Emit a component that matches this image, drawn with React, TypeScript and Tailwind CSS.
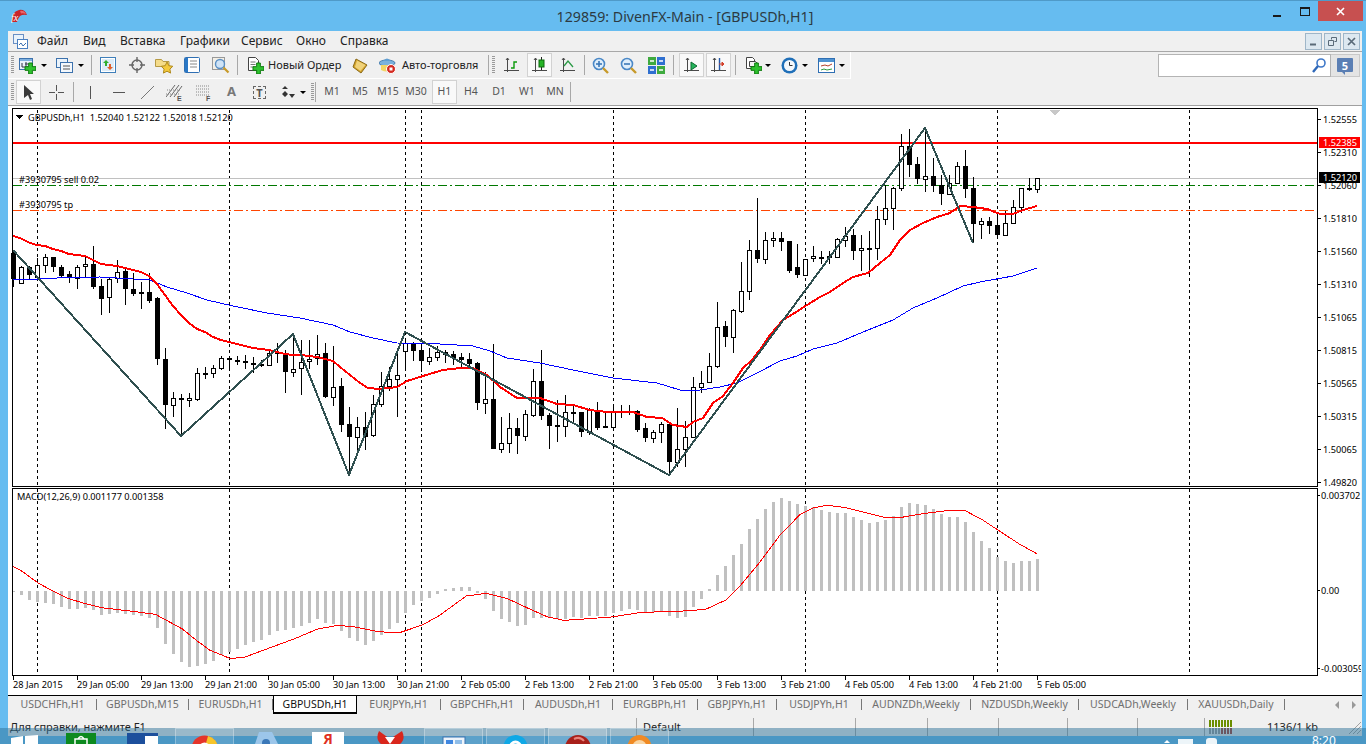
import React from "react";

// [wickTop, bodyTop, bodyBottom, wickBottom, white?1:0]; candle i sits on pixel column 13 + 8i
const C: number[][] = [
[250,253,279,287,0],[266,267,283,284,1],[266,267,275,279,0],[258,265,277,279,1],[254,257,265,273,1],[257,257,267,272,0],[265,267,276,278,0],[271,274,277,283,0],[265,267,278,289,1],[257,264,266,277,1],
[246,264,287,289,0],[279,286,299,315,0],[277,279,297,313,1],[260,272,278,283,1],[269,271,289,305,0],[273,289,294,296,0],[282,292,293,309,0],[273,292,301,303,0],[297,298,359,365,0],[348,359,405,429,0],
[392,398,405,417,1],[394,398,400,436,0],[393,398,400,407,1],[368,373,399,401,1],[367,373,374,379,1],[365,368,373,378,1],[356,358,368,370,1],[356,358,360,370,0],[356,360,362,365,0],[355,361,363,369,0],
[357,363,364,373,0],[360,364,366,367,0],[350,353,365,366,1],[343,352,353,363,0],[350,354,372,393,0],[334,369,372,377,1],[340,362,368,395,1],[340,359,361,369,1],[335,354,358,365,1],[343,353,397,398,0],
[346,387,397,406,1],[378,386,425,432,0],[407,424,437,474,0],[417,427,437,455,1],[412,427,437,450,0],[395,404,435,437,1],[372,386,404,407,1],[367,379,386,391,1],[353,375,379,417,1],[341,343,351,369,1],
[342,343,351,361,0],[345,350,361,372,0],[348,357,361,365,1],[346,352,357,361,1],[350,352,355,363,0],[351,354,358,365,0],[353,357,360,368,0],[353,359,364,369,0],[362,363,403,410,0],[372,399,403,414,1],
[344,399,449,449,0],[417,443,449,453,1],[413,428,443,453,1],[418,428,436,454,0],[410,414,436,441,1],[369,381,415,417,1],[350,381,416,420,0],[413,415,426,449,0],[400,425,426,442,0],[395,412,426,437,1],
[406,412,414,423,0],[412,412,432,437,0],[408,410,432,435,1],[402,411,428,430,0],[413,426,428,428,0],[405,412,427,427,1],[405,411,412,418,0],[405,411,412,415,0],[410,411,430,432,0],[423,428,438,442,0],
[430,432,438,443,1],[422,424,432,443,1],[423,424,462,475,0],[408,449,462,467,1],[421,437,449,467,1],[377,387,437,438,1],[371,383,387,393,1],[353,366,382,382,1],[302,327,366,368,1],[321,326,337,347,0],
[309,310,337,353,1],[262,291,311,313,1],[240,250,291,300,1],[198,250,259,263,0],[232,240,259,264,1],[232,238,240,247,1],[232,238,242,251,0],[241,241,271,273,0],[244,267,275,278,0],[259,259,275,275,1],
[246,256,258,262,1],[251,257,258,264,0],[251,256,257,264,0],[238,239,257,257,1],[227,236,240,247,1],[229,235,251,260,0],[235,248,250,271,1],[231,248,248,277,0],[206,219,248,260,1],[185,208,219,225,1],
[187,188,208,230,1],[134,146,188,191,1],[129,146,165,177,0],[157,164,179,184,0],[128,176,179,192,1],[158,176,186,192,0],[175,185,194,205,0],[175,183,194,195,1],[162,166,183,184,1],[150,166,189,198,0],
[177,188,224,243,0],[218,221,224,239,1],[217,221,226,234,0],[215,225,235,237,0],[211,223,235,235,1],[200,207,223,223,1],[188,188,207,213,1],[178,188,190,191,0],[178,178,189,193,1],
];

// reference zoom rows of the histogram tip; 318 is the zero line, y = 485 + v/3
const H: number[] = [320,330,345,352,355,357,366,372,372,368,376,390,386,383,387,390,392,400,428,476,506,530,545,542,538,527,510,500,491,480,472,465,450,438,434,430,422,414,403,414,417,438,458,468,480,468,450,432,414,385,360,348,338,327,312,310,306,306,325,342,378,402,410,423,420,398,398,400,402,402,396,400,392,392,392,385,378,372,375,381,381,380,392,398,395,365,342,312,270,243,210,177,132,102,72,51,39,48,57,63,66,75,81,84,84,96,105,114,111,105,93,66,54,57,60,72,87,96,96,111,141,168,189,216,228,234,228,228,222];

const pts = (a: number[][]) => a.map((p) => p.join(",")).join(" ");

const RED_MA = [[13,236],[20,238],[30,243],[37,245],[45,246],[53,249],[61,251],[69,254],[77,255],[85,256],[93,260],[101,264],[109,265],[117,266],[125,268],[133,270],[141,272],[149,276],[157,284],[165,295],[173,306],[181,315],[189,323],[197,329],[205,332],[213,337],[221,340],[229,342],[237,344],[245,346],[253,348],[261,349],[269,350],[277,352],[285,354],[293,355],[301,355],[309,356],[317,357],[325,359],[333,361],[340,367],[350,375],[360,383],[368,388],[380,389],[397,387],[407,381],[423,376],[443,370],[460,368],[473,368],[487,375],[500,387],[517,398],[540,398],[557,404],[573,405],[590,410],[607,412],[633,412],[647,417],[662,418],[673,425],[680,426],[687,427],[693,422],[703,418],[713,403],[723,396],[733,383],[743,368],[752,360],[762,347],[770,335],[783,320],[793,314],[807,305],[820,297],[830,292],[843,283],[853,277],[868,273],[880,263],[890,255],[900,240],[910,230],[923,223],[937,217],[950,213],[960,206],[973,207],[987,209],[1000,214],[1013,214],[1023,210],[1037,206]];
const BLUE_MA = [[13,279],[40,279],[57,278],[100,277],[150,280],[167,287],[187,293],[207,300],[233,306],[267,313],[300,318],[333,325],[350,332],[373,338],[397,343],[440,344],[473,346],[490,351],[507,358],[540,363],[573,370],[613,378],[657,383],[680,390],[700,390],[720,387],[737,383],[757,373],[780,361],[797,356],[813,349],[837,343],[863,332],[893,320],[913,308],[937,298],[963,286],[980,282],[1013,276],[1037,268]];
const ZIGZAG = [[13,250],[181,436],[293,334],[349,475],[405,332],[669,475],[925,128],[973,243]];
const SIGNAL_A = [[38,244],[60,255],[110,292],[150,315],[200,340],[250,355],[300,368],[400,380],[460,388],[500,410],[540,432],[580,465],[620,495],[680,520],[720,518],[800,488],[870,462],[940,432],[1000,421],[1050,426],[1120,440],[1180,444],[1250,420],[1300,392],[1380,333],[1440,325],[1500,340],[1568,372]];
const SIGNAL_B = [[50,395],[100,406],[160,402],[240,396],[330,382],[440,379],[520,373],[580,345],[620,305],[680,232],[740,150],[800,88],[840,68],[880,61],[930,67],[1050,97],[1100,97],[1170,85],[1240,76],[1290,78],[1340,105],[1400,145],[1450,178],[1500,206]];
const SIGNAL = [
  ...SIGNAL_A.map(([x, y]) => [x / 2.96, 485 + y / 3]),
  ...SIGNAL_B.map(([x, y]) => [530 + x / 2.96, 485 + y / 3]),
];

const GRID = [37, 229, 405, 421, 613, 805, 997, 1189];
const PRICES: [string, number][] = [["1.52555",119],["1.52310",152],["1.52060",185],["1.51810",218],["1.51560",251],["1.51310",284],["1.51065",317],["1.50815",350],["1.50565",383],["1.50315",416],["1.50065",449],["1.49820",482]];
const TIMES: [string, number][] = [["28 Jan 2015",13],["29 Jan 05:00",77],["29 Jan 13:00",141],["29 Jan 21:00",205],["30 Jan 05:00",268],["30 Jan 13:00",333],["30 Jan 21:00",397],["2 Feb 05:00",461],["2 Feb 13:00",525],["2 Feb 21:00",589],["3 Feb 05:00",653],["3 Feb 13:00",717],["3 Feb 21:00",781],["4 Feb 05:00",845],["4 Feb 13:00",909],["4 Feb 21:00",973],["5 Feb 05:00",1037]];

function Chart() {
  return (
    <svg width={1353} height={589} viewBox="8 106 1353 589" className="block shrink-0 bg-white font-['Liberation_Sans',sans-serif] text-[9.2px]">
      <g shapeRendering="crispEdges">
        {GRID.map((x) => (
          <g key={x} stroke="#000" strokeDasharray="3 3">
            <line x1={x + 0.5} x2={x + 0.5} y1={110} y2={486} />
            <line x1={x + 0.5} x2={x + 0.5} y1={489} y2={675} />
          </g>
        ))}
        <line x1={13} x2={1318} y1={178.5} y2={178.5} stroke="#c0c0c0" />
        <line x1={13} x2={1318} y1={185.5} y2={185.5} stroke="#007800" strokeDasharray="9 3 2 3" />
        <line x1={13} x2={1318} y1={210.5} y2={210.5} stroke="#ff4500" strokeDasharray="9 3 2 3" />
        <rect x={13} y={142} width={1304} height={2} fill="#ff0000" />
        {H.map((v, i) => {
          const y = 485 + v / 3;
          return <rect key={i} x={12 + 8 * i} y={Math.min(y, 591)} width={3} height={Math.max(1, Math.abs(591 - y))} fill="#c0c0c0" />;
        })}
        {C.map(([wt, bt, bb, wb, w], i) => {
          const x = 13 + 8 * i;
          return (
            <g key={i}>
              <rect x={x} y={wt} width={1} height={wb - wt} fill="#000" />
              {w ? (
                <rect x={x - 1.5} y={bt + 0.5} width={4} height={Math.max(bb - bt, 1)} fill="#fff" stroke="#000" />
              ) : (
                <rect x={x - 2} y={bt} width={5} height={Math.max(bb - bt, 2)} fill="#000" />
              )}
            </g>
          );
        })}
        <polyline points={pts(BLUE_MA)} fill="none" stroke="#0000ff" strokeWidth={1} />
        <polyline points={pts(RED_MA)} fill="none" stroke="#ff0000" strokeWidth={2} />
        <polyline points={pts(ZIGZAG)} fill="none" stroke="#2f4f4f" strokeWidth={2} />
        <polyline points={pts(SIGNAL)} fill="none" stroke="#ff0000" strokeWidth={1} />
        <rect x={12.5} y={108.5} width={1305} height={378} fill="none" stroke="#000" />
        <rect x={12.5} y={488.5} width={1305} height={187} fill="none" stroke="#000" />
        {PRICES.map(([, y]) => <rect key={y} x={1318} y={y} width={3} height={1} fill="#000" />)}
        {[495, 590, 668].map((y) => <rect key={y} x={1318} y={y} width={2} height={1} fill="#000" />)}
        {TIMES.map(([, x]) => <rect key={x} x={x} y={676} width={1} height={4} fill="#000" />)}
        <polygon points="1050,110 1060,110 1055,116" fill="#c8c8c8" />
        <polygon points="16,115 23,115 19.5,119" fill="#000" />
        <rect x={1319} y={137} width={41} height={11} fill="#ff0000" />
        <rect x={1319} y={172} width={41} height={11} fill="#000" />
      </g>
      <text x={28} y={120.5}>GBPUSDh,H1 &nbsp;1.52040 1.52122 1.52018 1.52120</text>
      <text x={19} y={182.5}>#3930795 sell 0.02</text>
      <text x={19} y={207.5}>#3930795 tp</text>
      <text x={17} y={500}>MACD(12,26,9) 0.001177 0.001358</text>
      {PRICES.map(([t, y]) => <text key={t} x={1323} y={y + 3.5}>{t}</text>)}
      <text x={1323} y={146} fill="#fff">1.52385</text>
      <text x={1323} y={181} fill="#fff">1.52120</text>
      <text x={1321} y={498.5}>0.003702</text>
      <text x={1321} y={593.5}>0.00</text>
      <text x={1321} y={671.5}>-0.003059</text>
      {TIMES.map(([t, x]) => <text key={t} x={x} y={687.5}>{t}</text>)}
    </svg>
  );
}

const Drop = ({ ml }: { ml: string }) => (
  <span className={`block h-0 w-0 shrink-0 border-x-[3px] border-t-[3px] border-x-transparent border-t-black ${ml}`} />
);
const Sep = ({ ml }: { ml: string }) => <span className={`block h-[20px] w-px shrink-0 bg-[#a8a8a8] ${ml}`} />;
const Grip = ({ ml }: { ml: string }) => (
  <span className={`block h-[18px] w-[3px] shrink-0 bg-[repeating-linear-gradient(to_bottom,#9a9a9a_0,#9a9a9a_1px,transparent_1px,transparent_2px)] ${ml}`} />
);
const Btn = ({ ml, children }: { ml: string; children: React.ReactNode }) => (
  <span className={`flex h-[24px] w-[25px] shrink-0 items-center justify-center border border-[#d2d2d2] bg-[#f9f9f9] ${ml}`}>{children}</span>
);

function Ico({ w = 17, h = 17, ml, children }: { w?: number; h?: number; ml?: string; children: React.ReactNode }) {
  return (
    <svg width={w} height={h} viewBox={`0 0 ${w} ${h}`} className={`block shrink-0 ${ml ?? ""}`}>
      {children}
    </svg>
  );
}

const Plus = ({ x = 8, y = 8, s = 9 }: { x?: number; y?: number; s?: number }) => (
  <path d={`M${x + s / 3} ${y}h${s / 3}v${s / 3}h${s / 3}v${s / 3}h${-s / 3}v${s / 3}h${-s / 3}v${-s / 3}h${-s / 3}v${-s / 3}h${s / 3}z`} fill="#2fc22f" stroke="#0d7a0d" strokeWidth={1} />
);
const WinChart = () => (
  <g>
    <rect x={0.5} y={1.5} width={13} height={11} fill="#eaf3fb" stroke="#3d72ad" />
    <rect x={1} y={2} width={12} height={2} fill="#7fb0de" />
    <path d="M3 6v4M3 10h7M7 5v4M6 7h3" stroke="#334" fill="none" />
  </g>
);
const MagGlass = ({ sign }: { sign: "+" | "-" }) => (
  <g>
    <circle cx={7} cy={7} r={5.5} fill="#dfeefb" stroke="#4a88c7" strokeWidth={1.6} />
    <path d="M11 11l5 5" stroke="#c79a2a" strokeWidth={2.4} />
    <path d="M4 7h6" stroke="#3b78b8" strokeWidth={1.6} />
    {sign === "+" && <path d="M7 4v6" stroke="#3b78b8" strokeWidth={1.6} />}
  </g>
);
const Axes = () => <path d="M3.5 1v14M0 13.5h15M2 3l1.5-2 1.5 2" stroke="#4a4a4a" fill="none" />;

function Toolbar1() {
  return (
    <div className="flex h-[26px] w-[843px] shrink-0 items-center border-r border-white">
      <Grip ml="ml-[3px]" />
      <Ico ml="ml-[5px]">
        <WinChart />
        <Plus x={6} y={6} s={11} />
      </Ico>
      <Drop ml="ml-[5px]" />
      <Ico ml="ml-[9px]">
        <rect x={0.5} y={1.5} width={11} height={9} fill="#eaf3fb" stroke="#3d72ad" />
        <rect x={4.5} y={5.5} width={12} height={10} fill="#f4f8fc" stroke="#3d72ad" />
        <path d="M7 9h7M7 12h7" stroke="#555" />
      </Ico>
      <Drop ml="ml-[5px]" />
      <Sep ml="ml-[7px]" />
      <Ico ml="ml-[8px]" w={16} h={16}>
        <rect x={0.5} y={0.5} width={15} height={15} fill="#fff" stroke="#3f7fba" />
        <rect x={2} y={2} width={12} height={12} fill="#dcecf8" />
        <path d="M6 3l3 3H7v3H5V6H3z" fill="#2faf2f" />
        <path d="M10 13l-3-3h2V7h2v3h2z" fill="#e0602a" />
      </Ico>
      <Ico ml="ml-[13px]" w={16} h={16}>
        <circle cx={8} cy={8} r={5} fill="#ececec" stroke="#666" strokeWidth={1.4} />
        <path d="M8 0v5M8 11v5M0 8h5M11 8h5" stroke="#666" strokeWidth={1.4} />
      </Ico>
      <Ico ml="ml-[10px]" w={18} h={17}>
        <path d="M0.5 2.5h6l1.5 2h6v5h-13.5z" fill="#f5dc8a" stroke="#b69a45" />
        <path d="M12 5l1.8 3.7 4 .6-2.9 2.8.7 4-3.6-1.9-3.6 1.9.7-4-2.9-2.8 4-.6z" fill="#f4c93c" stroke="#b08a1e" />
      </Ico>
      <Ico ml="ml-[11px]" w={16} h={16}>
        <rect x={0.5} y={0.5} width={15} height={15} rx={1} fill="#fff" stroke="#2f6fb3" />
        <rect x={1} y={1} width={3} height={14} fill="#2a78c6" />
        <path d="M6 4h7M6 7h7M6 10h7" stroke="#888" />
      </Ico>
      <Ico ml="ml-[12px]" w={18} h={18}>
        <rect x={0.5} y={1.5} width={12} height={12} fill="#f3efe6" stroke="#999" />
        <circle cx={8} cy={8} r={4.5} fill="#cfe3f6" stroke="#5a8fc4" strokeWidth={1.4} />
        <path d="M11.5 11.5l5 5" stroke="#c79a2a" strokeWidth={2.2} />
      </Ico>
      <Sep ml="ml-[7px]" />
      <Ico ml="ml-[9px]">
        <path d="M1.5 0.5h7l3 3v10h-10z" fill="#fff" stroke="#444" />
        <path d="M3.5 5h5M3.5 7.5h5M3.5 10h3" stroke="#777" />
        <Plus x={6} y={6} s={11} />
      </Ico>
      <span className="ml-[4px] w-[74px] shrink-0 whitespace-nowrap text-[11px] text-[#222]">Новый Ордер</span>
      <Ico ml="ml-[10px]">
        <path d="M4 2l11 6-6 8L1 10z" fill="#d4a32a" stroke="#8a6a18" />
        <path d="M5 3.5l8.5 4.5-5 6L3 10z" fill="#f0d27a" />
      </Ico>
      <Ico ml="ml-[10px]">
        <ellipse cx={8} cy={6} rx={8} ry={3} fill="#7ab1dc" stroke="#4b7fae" />
        <path d="M4 4q4-5 8 0z" fill="#5f9ed2" />
        <path d="M2 8h12v5q-6 3-12 0z" fill="#f3d564" />
        <circle cx={12} cy={12} r={4.5} fill="#d42a20" stroke="#fff" />
        <rect x={10.5} y={10.5} width={3} height={3} fill="#fff" />
      </Ico>
      <span className="ml-[6px] w-[79px] shrink-0 whitespace-nowrap text-[11px] text-[#222]">Авто-торговля</span>
      <Sep ml="ml-[7px]" />
      <Grip ml="ml-[3px]" />
      <Ico ml="ml-[9px]" w={15} h={16}>
        <Axes />
        <path d="M7 11h3V5h3" stroke="#0a9a0a" strokeWidth={1.4} fill="none" />
      </Ico>
      <Btn ml="ml-[8px]">
        <Ico w={15} h={16}>
          <Axes />
          <path d="M9.5 0v13" stroke="#222" />
          <rect x={7} y={3} width={5} height={7} fill="#25b325" stroke="#0c6a0c" />
        </Ico>
      </Btn>
      <Ico ml="ml-[8px]" w={15} h={16}>
        <Axes />
        <path d="M4 9l4-5 5 6" stroke="#2a9a45" strokeWidth={1.3} fill="none" />
      </Ico>
      <Sep ml="ml-[9px]" />
      <Ico ml="ml-[7px]"><MagGlass sign="+" /></Ico>
      <Ico ml="ml-[11px]"><MagGlass sign="-" /></Ico>
      <Ico ml="ml-[11px]">
        <rect x={0} y={0} width={8} height={8} fill="#3faa3f" />
        <rect x={9} y={0} width={8} height={8} fill="#2f6fd0" />
        <rect x={0} y={9} width={8} height={8} fill="#2f6fd0" />
        <rect x={9} y={9} width={8} height={8} fill="#3faa3f" />
        <path d="M2 4h4M11 4h4M2 13h4M11 13h4" stroke="#fff" strokeWidth={1.6} />
      </Ico>
      <Sep ml="ml-[8px]" />
      <Btn ml="ml-[5px]">
        <Ico w={15} h={16}>
          <Axes />
          <path d="M7 5l6 4-6 4z" fill="#25b35a" stroke="#0c6a30" />
        </Ico>
      </Btn>
      <Btn ml="ml-[2px]">
        <Ico w={15} h={16}>
          <Axes />
          <path d="M8.5 1v12" stroke="#2257a8" strokeWidth={1.4} />
          <path d="M11 7l-3 0M11 5l2 2-2 2z" fill="#d2402a" stroke="#d2402a" />
        </Ico>
      </Btn>
      <Sep ml="ml-[4px]" />
      <Ico ml="ml-[9px]">
        <path d="M1.5 0.5h6l2 2v9h-8z" fill="#fff" stroke="#444" />
        <path d="M4.5 4.5h6l2 2v3h-8z" fill="#f4f4f4" stroke="#444" />
        <Plus x={6} y={6} s={11} />
      </Ico>
      <Drop ml="ml-[3px]" />
      <Ico ml="ml-[10px]">
        <circle cx={8.5} cy={8.5} r={8} fill="#1f6fb8" />
        <circle cx={8.5} cy={8.5} r={5.5} fill="#f4f8fc" />
        <path d="M8.5 5v3.5h3" stroke="#333" fill="none" />
      </Ico>
      <Drop ml="ml-[4px]" />
      <Ico ml="ml-[10px]">
        <rect x={0.5} y={1.5} width={16} height={14} fill="#fff" stroke="#2f6fb3" />
        <rect x={1} y={2} width={15} height={3} fill="#4f93d2" />
        <path d="M3 9l4-1 3 1 4-2" stroke="#b5402a" fill="none" />
        <path d="M3 13l3-1 3 1 5-1" stroke="#2f9a3f" fill="none" />
      </Ico>
      <Drop ml="ml-[4px]" />
    </div>
  );
}

const TF = ({ t }: { t: string }) => (
  <span className="flex w-[28px] shrink-0 justify-center text-[10.5px] text-[#555]">{t}</span>
);

function Toolbar2() {
  return (
    <div className="flex h-[26px] shrink-0 items-center">
      <Grip ml="ml-[3px]" />
      <Btn ml="ml-[2px]">
        <Ico w={13} h={17}>
          <path d="M2 1l10 9H8l2 5-2 1-2-5-4 3z" fill="#3a3a3a" />
        </Ico>
      </Btn>
      <Ico ml="ml-[8px]" w={15} h={15}>
        <path d="M7.5 0v6M7.5 9v6M0 7.5h6M9 7.5h6" stroke="#555" />
      </Ico>
      <Sep ml="ml-[9px]" />
      <span className="ml-[16px] block h-[13px] w-px shrink-0 bg-[#555]" />
      <span className="ml-[22px] block h-px w-[12px] shrink-0 bg-[#555]" />
      <Ico ml="ml-[16px]" w={13} h={13}>
        <path d="M0 13L13 0" stroke="#777" />
      </Ico>
      <Ico ml="ml-[12px]" w={17} h={17}>
        <path d="M0 13L9 1M4 13L13 1M8 13L16 2" stroke="#666" />
        <path d="M1 6h13M0 10h13" stroke="#888" strokeDasharray="1 1" />
        <text x={11} y={17} fontSize={7} fontWeight={700} fill="#555" fontFamily="Liberation Sans">E</text>
      </Ico>
      <Ico ml="ml-[13px]" w={15} h={17}>
        <path d="M0 2h14M0 5h14M0 8h14M0 11h14" stroke="#888" strokeDasharray="1 1" />
        <text x={10} y={17} fontSize={7} fontWeight={700} fill="#555" fontFamily="Liberation Sans">F</text>
      </Ico>
      <span className="ml-[16px] w-[8px] shrink-0 text-[13px] font-bold text-[#777]">A</span>
      <span className="ml-[18px] flex h-[13px] w-[13px] shrink-0 items-center justify-center border border-dashed border-[#666] text-[11px] font-bold leading-none text-[#555]">T</span>
      <Ico ml="ml-[15px]" w={15} h={15}>
        <path d="M1 4l3-3 3 3zM4 6l3 3-3 3-3-3z" fill="#333" />
        <path d="M8 9h6l-3 4z" fill="#333" />
      </Ico>
      <Drop ml="ml-[4px]" />
      <Grip ml="ml-[5px]" />
      <Sep ml="ml-[1px]" />
      <span className="ml-[2px] flex">
        <TF t="M1" />
        <TF t="M5" />
        <TF t="M15" />
        <TF t="M30" />
      </span>
      <Btn ml="ml-[2px]">
        <span className="text-[10.5px] text-[#555]">H1</span>
      </Btn>
      <span className="flex">
        <TF t="H4" />
        <TF t="D1" />
        <TF t="W1" />
        <TF t="MN" />
      </span>
      <Sep ml="ml-[1px]" />
    </div>
  );
}

const TAB_W: [string, string, boolean][] = [
  ["USDCHFh,H1", "w-[88px]", false],
  ["GBPUSDh,M15", "w-[92px]", false],
  ["EURUSDh,H1", "w-[84px]", false],
  ["GBPUSDh,H1", "w-[84px]", true],
  ["EURJPYh,H1", "w-[84px]", false],
  ["GBPCHFh,H1", "w-[83px]", false],
  ["AUDUSDh,H1", "w-[89px]", false],
  ["EURGBPh,H1", "w-[85px]", false],
  ["GBPJPYh,H1", "w-[79px]", false],
  ["USDJPYh,H1", "w-[85px]", false],
  ["AUDNZDh,Weekly", "w-[109px]", false],
  ["NZDUSDh,Weekly", "w-[108px]", false],
  ["USDCADh,Weekly", "w-[109px]", false],
  ["XAUUSDh,Daily", "w-[97px]", false],
];

function Tabs() {
  return (
    <div className="flex h-[18px] shrink-0 items-stretch border-t border-black text-[10.5px] leading-none">
      <span className="w-px shrink-0" />
      {TAB_W.map(([t, w, active]) =>
        active ? (
          <span key={t} className={`-mt-px flex h-[19px] shrink-0 items-center justify-center border-x border-t border-b-2 border-black bg-white text-[#111] ${w}`}>{t}</span>
        ) : (
          <span key={t} className={`flex h-[17px] shrink-0 items-center justify-center text-[#6f6f6f] ${w}`}>
            <span className="flex h-[11px] w-full items-center justify-center border-r border-[#777]">{t}</span>
          </span>
        ),
      )}
      <span className="ml-[50px] mt-[5px] block h-0 w-0 border-y-[4px] border-r-[4px] border-y-transparent border-r-[#999]" />
      <span className="ml-[13px] mt-[5px] block h-0 w-0 border-y-[4px] border-l-[4px] border-y-transparent border-l-[#999]" />
    </div>
  );
}

const STATUS_W = ["w-[117px]", "w-[102px]", "w-[72px]", "w-[71px]", "w-[69px]", "w-[70px]", "w-[67px]"];

function Status() {
  return (
    <div className="mt-[5px] flex h-[18px] shrink-0 items-center text-[11px] leading-none text-[#222]">
      <span className="mb-[2px] w-[628px] shrink-0 pl-[2px]">Для справки, нажмите F1</span>
      {STATUS_W.map((w, i) => (
        <span key={w} className={`flex h-full shrink-0 items-center border-l border-[#a8a8a8] pb-[2px] pl-[6px] ${w}`}>{i === 0 ? "Default" : ""}</span>
      ))}
      <span className="flex h-full flex-1 items-center border-l border-[#a8a8a8] pl-[4px]">
        <Ico w={24} h={14}>
          {Array.from({ length: 8 }, (_, i) => (
            <g key={i}>
              <rect x={i * 3} y={0} width={2} height={7} fill="#6b8e00" />
              <rect x={i * 3} y={8} width={2} height={6} fill={i < 4 ? "#999" : "#a83a2a"} />
            </g>
          ))}
        </Ico>
        <span className="mb-[2px] ml-[34px]">1136/1 kb</span>
        <Ico w={13} h={14} ml="ml-auto mr-[1px]">
          <path d="M13 2L1 14M13 6l-8 8M13 10l-4 4" stroke="#a0a0a0" />
        </Ico>
      </span>
    </div>
  );
}

const TaskBtn = ({ w = "w-[59px]", ml, active, children }: { w?: string; ml: string; active?: boolean; children: React.ReactNode }) => (
  <span className={`flex h-[20px] shrink-0 justify-center border border-white/30 pt-[6px] ${active ? "bg-white/20" : "bg-white/10"} ${w} ${ml}`}>{children}</span>
);

function Taskbar() {
  return (
    <div className="absolute inset-x-0 bottom-0 flex h-[16px] overflow-hidden bg-[#2e7298]/50">
      <Ico w={27} h={10} ml="ml-[11px] mt-[7px]">
        <path d="M0 3l12-2v9H0zM14 1L27 0v10H14z" fill="#fff" />
      </Ico>
      <span className="ml-[28px] mt-[5px] block h-[14px] w-[30px] shrink-0 bg-[#0d8a1f]">
        <Ico w={30} h={11}>
          <path d="M9 6h12v6H9zM12 6q3-5 6 0" stroke="#fff" fill="none" strokeWidth={1.5} />
        </Ico>
      </span>
      <span className="ml-[31px] mt-[5px] flex h-[14px] w-[31px] shrink-0 justify-end bg-[#1c4f9c]">
        <span className="mt-[3px] h-[11px] w-[13px] bg-white" />
      </span>
      <TaskBtn ml="ml-[17px]">
        <Ico w={27} h={10}>
          <circle cx={13.5} cy={13.5} r={13} fill="#e5352b" />
          <path d="M13.5 13.5L27 13A13 13 0 0 0 17 1z" fill="#f7c52a" />
          <circle cx={13.5} cy={13.5} r={6} fill="#fff" />
          <circle cx={13.5} cy={13.5} r={4.5} fill="#3f86e0" />
        </Ico>
      </TaskBtn>
      <Ico w={27} h={12} ml="ml-[18px] mt-[4px]">
        <path d="M3 12L7 0h13l6 12z" fill="#9cc6ea" />
        <circle cx={14} cy={11} r={4} fill="#3b78b8" />
      </Ico>
      <span className="ml-[33px] mt-[4px] flex h-[16px] w-[32px] shrink-0 justify-center bg-white text-[14px] font-bold leading-[14px] text-[#e0301e]">Я</span>
      <Ico w={27} h={13} ml="ml-[33px] mt-[3px]">
        <path d="M2 0l11 8L25 0q4 8-2 13H4Q-2 8 2 0z" fill="#d9261c" />
        <path d="M8 6l5 7 5-7z" fill="#fff" />
      </Ico>
      <TaskBtn ml="ml-[20px]">
        <Ico w={24} h={12}>
          <rect x={1} y={2} width={22} height={10} fill="#eef4fb" stroke="#3d72ad" />
          <rect x={4} y={5} width={7} height={7} fill="#3f86e0" />
          <rect x={13} y={5} width={7} height={7} fill="#8fbde8" />
        </Ico>
      </TaskBtn>
      <TaskBtn ml="ml-[3px]">
        <Ico w={29} h={11}>
          <circle cx={14.5} cy={12} r={12} fill="#0fa8e6" />
          <circle cx={14.5} cy={12} r={5} fill="none" stroke="#fff" strokeWidth={3} />
        </Ico>
      </TaskBtn>
      <TaskBtn ml="ml-[3px]" active>
        <Ico w={28} h={11}>
          <circle cx={14} cy={13} r={13} fill="#a8201a" />
          <path d="M10 4q6-3 10 2" stroke="#e8837a" fill="none" strokeWidth={2} />
        </Ico>
      </TaskBtn>
      <TaskBtn ml="ml-[3px]">
        <Ico w={29} h={11}>
          <circle cx={14.5} cy={12} r={12} fill="#f08a24" />
          <circle cx={14.5} cy={12} r={7} fill="#f9d6a4" />
        </Ico>
      </TaskBtn>
      <span className="ml-[495px] mt-[12px] block h-0 w-0 border-x-[3px] border-b-[3px] border-x-transparent border-b-white" />
      <span className="ml-[8px] mt-[11px] block h-[5px] w-[15px] bg-white/90" />
      <span className="ml-[13px] mt-[10px] block h-[6px] w-[11px] rounded-t-[3px] bg-white/90" />
      <span className="ml-[95px] mt-[5px] text-[12px] leading-[16px] text-white">8:20</span>
    </div>
  );
}

export default function App() {
  return (
    <div className="relative flex h-[744px] w-[1366px] flex-col overflow-hidden bg-[#66bcf0] font-['Liberation_Sans',sans-serif]">
      <div className="relative flex h-[31px] shrink-0 items-start border-t border-[#4f9ac8]">
        <Ico w={17} h={14} ml="ml-[10px] mt-[8px]">
          <path d="M2 13Q1 3 9 1q6-1 8 5-4-1-7 1-2 2-3 6z" fill="#c8242a" />
          <path d="M10 2q4-1 6 3-3-1-5-.5z" fill="#e8656a" />
          <text x={1} y={12} fontSize={10} fontStyle="italic" fill="#fff" fontFamily="Liberation Serif">fx</text>
        </Ico>
        <span className="absolute left-0 top-[6px] w-[1370px] text-center font-['Noto_Sans',sans-serif] text-[14.2px] leading-[19px] text-[#2c3a42]">129859: DivenFX-Main - [GBPUSDh,H1]</span>
        <span className="ml-auto mr-[19px] mt-[14px] block h-[2px] w-[8px] bg-[#1a1a1a]" />
        <span className="mr-[8px] mt-[6px] block h-[9px] w-[10px] border border-t-2 border-[#1a1a1a]" />
        <span className="mr-[3px] flex h-[20px] w-[45px] items-center justify-center bg-[#c75050]">
          <Ico w={9} h={9}>
            <path d="M1 1l7 7M8 1L1 8" stroke="#fff" strokeWidth={1.6} />
          </Ico>
        </span>
      </div>
      <div className="ml-[8px] mr-[4px] flex h-[705px] w-[1354px] shrink-0 flex-col bg-[#f0f0f0] text-[#222]">
        <div className="flex h-[20px] shrink-0 items-center text-[12px] leading-none">
          <Ico w={15} h={15} ml="ml-[5px]">
            <rect x={0.5} y={0.5} width={10} height={9} fill="#eaf3fb" stroke="#6a8fc4" />
            <rect x={4.5} y={5.5} width={10} height={9} fill="#fff" stroke="#4a7fc0" />
            <path d="M6 11l2-2 2 3 3-3" stroke="#3a6fb0" fill="none" />
          </Ico>
          <span className="ml-[9px] w-[46px] shrink-0">Файл</span>
          <span className="w-[37px] shrink-0">Вид</span>
          <span className="w-[60px] shrink-0">Вставка</span>
          <span className="w-[61px] shrink-0">Графики</span>
          <span className="w-[55px] shrink-0">Сервис</span>
          <span className="w-[44px] shrink-0">Окно</span>
          <span className="shrink-0">Справка</span>
          <span className="ml-auto flex gap-[2px] pr-[2px]">
            {[0, 1, 2].map((k) => (
              <span key={k} className="flex h-[17px] w-[17px] items-center justify-center border border-[#9fb6c8] bg-[#dde8f0]">
                <Ico w={9} h={9}>
                  {k === 0 && <path d="M1 7.5h6" stroke="#5a6a78" strokeWidth={2} />}
                  {k === 1 && <path d="M3.5 2.5V.5h5v4h-2M.5 3.5h5v5h-5z" stroke="#5a6a78" fill="none" />}
                  {k === 2 && <path d="M1 1l7 7M8 1L1 8" stroke="#5a6a78" strokeWidth={1.7} />}
                </Ico>
              </span>
            ))}
          </span>
        </div>
        <div className="h-px shrink-0 bg-[#a8a8a8]" />
        <div className="flex shrink-0">
          <Toolbar1 />
          <div className="ml-auto mr-[2px] flex h-[24px] items-center self-center">
            <span className="flex h-[23px] w-[173px] items-center justify-end border border-[#b4b4b4] bg-white pr-[4px]">
              <Ico w={14} h={15}>
                <circle cx={9} cy={5} r={4} fill="#fff" stroke="#3f78c8" strokeWidth={1.6} />
                <path d="M6 8l-5 6" stroke="#2f68b8" strokeWidth={2.4} />
              </Ico>
            </span>
            <span className="flex h-[23px] w-[29px] items-center justify-center border-y border-r border-[#c8c8c8] bg-[#e4e4e4]">
              <span className="relative flex h-[14px] w-[16px] items-center justify-center rounded-[1px] bg-[#5b7fb4] text-[11px] font-bold leading-none text-white">
                5
                <span className="absolute -bottom-[3px] right-[8px] h-0 w-0 border-l-[4px] border-t-[4px] border-l-transparent border-t-[#5b7fb4]" />
              </span>
            </span>
          </div>
        </div>
        <div className="h-px shrink-0">
          <div className="h-px w-[843px] bg-white" />
        </div>
        <Toolbar2 />
        <div className="h-px shrink-0 bg-[#a0a0a0]" />
        <Chart />
        <Tabs />
        <Status />
      </div>
      <Taskbar />
    </div>
  );
}
